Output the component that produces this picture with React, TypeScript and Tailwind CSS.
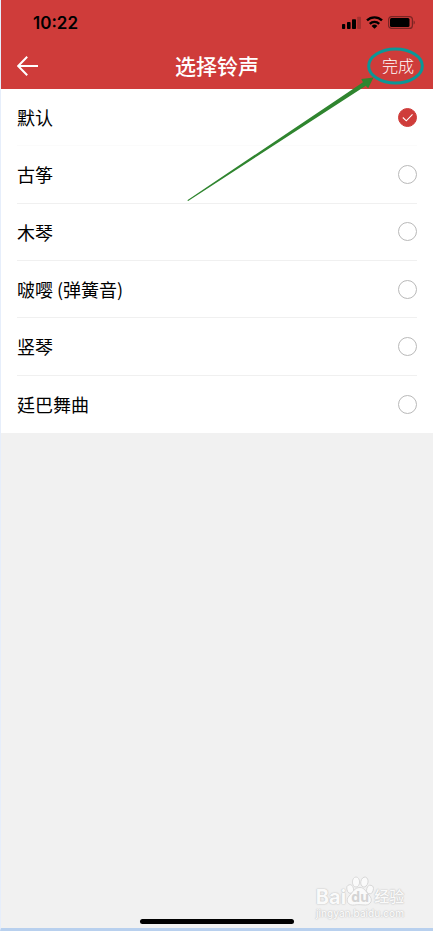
import { useState } from "react";

const ringtones = ["默认", "古筝", "木琴", "啵嘤 (弹簧音)", "竖琴", "廷巴舞曲"];

function StatusBar() {
  return (
    <div className="flex h-11 items-center justify-between pr-[18px] pl-8 text-black">
      <time className="pt-px font-[Inter,sans-serif] text-[17px] leading-5 font-semibold">10:22</time>
      <div className="flex items-center gap-[5px] pt-px">
        <svg width="19" height="13" viewBox="0 0 19 13" aria-label="信号">
          <rect x="0" y="8" width="3.2" height="5" rx="0.8" />
          <rect x="5" y="6" width="3.6" height="7" rx="0.8" />
          <rect x="10" y="3.2" width="4" height="9.8" rx="0.8" />
          <rect x="15.2" y="0.8" width="3.8" height="12.2" rx="0.8" fill="#a5302f" />
        </svg>
        <svg width="17" height="13" viewBox="0 0 17 13" fill="none" stroke="currentColor" strokeWidth="2.4" aria-label="无线网络">
          <path d="M1 4.4a10.8 10.8 0 0 1 15 0" />
          <path d="M3.8 7.8a6.8 6.8 0 0 1 9.4 0" />
          <path d="M8.5 12.8 5.6 10a4.2 4.2 0 0 1 5.8 0z" fill="currentColor" stroke="none" />
        </svg>
        <svg width="27" height="13" viewBox="0 0 27 13" aria-label="电量">
          <rect x="0.6" y="0.6" width="23.8" height="11.8" rx="3" fill="none" stroke="#7a2423" strokeWidth="1.2" />
          <rect x="2" y="2" width="19.5" height="9" rx="1.5" />
          <path d="M25.6 4.6v4c.7-.3 1.2-1.1 1.2-2s-.5-1.7-1.2-2z" fill="#7a2423" />
        </svg>
      </div>
    </div>
  );
}

function Pointer() {
  return (
    <svg
      className="pointer-events-none absolute top-10 right-2 z-10"
      width="240"
      height="164"
      viewBox="185 40 240 164"
      aria-hidden="true"
    >
      <ellipse cx="395.5" cy="66" rx="26.8" ry="17" fill="none" stroke="#0b9797" strokeWidth="3" />
      <path d="M187.3 200.2 363 82.2 361.2 79 373.5 77.6 368.2 88.2 365.8 85.8 188.2 201z" fill="#2f852f" />
    </svg>
  );
}

function Watermark() {
  return (
    <div className="flex w-[90px] flex-col items-center font-[Inter,'Noto_Sans_CJK_SC',sans-serif] text-[#fafafa] [text-shadow:0_0_1px_#ccc,0_0_1px_#ccc,0_0_2px_#ccc]">
      <div className="flex h-8 items-end text-[20px] leading-5 font-bold">
        <span>Bai</span>
        <span className="relative flex h-8 w-7 shrink-0 items-end justify-center">
          <svg className="absolute inset-0" width="28" height="32" viewBox="0 0 28 32" fill="#fafafa" stroke="#d2d2d2" strokeWidth="0.8" aria-hidden="true">
            <ellipse cx="4.2" cy="14" rx="3.3" ry="4.3" transform="rotate(-15 4.2 14)" />
            <ellipse cx="10" cy="7" rx="3.6" ry="5" />
            <ellipse cx="18.4" cy="7" rx="3.6" ry="5" transform="rotate(12 18.4 7)" />
            <ellipse cx="24" cy="14.5" rx="3.3" ry="4.3" transform="rotate(15 24 14.5)" />
            <path d="M14 12.5c4.5 0 6 4.500 9 7.500 4.500 4.500 2 10-3.500 10-3 0-7.500-.8-11 0-6.500 1-9.500-4.500-5.500-9 4-4 5.500-8.500 11-8.500z" />
          </svg>
          <span className="relative text-[14px] leading-5 text-[#d4d4d4] [text-shadow:none]">du</span>
        </span>
        <span className="text-[15px] font-medium">经验</span>
      </div>
      <span className="text-[10px] leading-3 font-medium">jingyan.baidu.com</span>
    </div>
  );
}

export default function App() {
  const [selected, setSelected] = useState(ringtones[0]);
  return (
    <div className="relative flex min-h-screen flex-col border-b-3 border-l border-b-[#b8d0ee] border-l-[#e6eefb] bg-[#f1f1f1] font-['Noto_Sans_CJK_SC',sans-serif]">
      <header className="bg-[#cf3c3a] text-white">
        <StatusBar />
        <nav className="grid h-[45px] grid-cols-[1fr_auto_1fr] items-center px-4 pb-0.5">
          <button type="button" aria-label="返回" className="justify-self-start">
            <svg width="21" height="20" viewBox="0 0 21 20" fill="none" stroke="currentColor" strokeWidth="2">
              <path d="M10.2 0.8 1.2 10l9 9.2M1.2 10H21" />
            </svg>
          </button>
          <h1 className="pb-0.5 text-[21px] leading-6 font-medium">选择铃声</h1>
          <button type="button" className="justify-self-end pr-[3px] pb-0.5 text-base leading-6 font-light">完成</button>
        </nav>
      </header>
      <Pointer />
      <main className="grid h-[344px] grid-rows-6 bg-white px-4">
        {ringtones.map((name, i) => (
          <label
            key={name}
            className={`flex items-center justify-between text-lg leading-6 text-black ${
              i === ringtones.length - 1 ? "" : i === 0 ? "border-b border-[#fbfbfb]" : "border-b border-[#f0f0f0]"
            }`}
          >
            <span>{name}</span>
            <span className="relative flex size-[19px]">
              <input
                type="radio"
                name="ringtone"
                checked={selected === name}
                onChange={() => setSelected(name)}
                className="peer size-[19px] appearance-none rounded-full border border-[#b9b9b9] bg-white checked:border-[#cf3c3a] checked:bg-[#cf3c3a]"
              />
              <svg
                className="pointer-events-none absolute inset-0 hidden peer-checked:block"
                width="19"
                height="19"
                viewBox="0 0 19 19"
                fill="none"
                stroke="#fff"
                strokeWidth="1.1"
                aria-hidden="true"
              >
                <path d="m4.8 9.5 3.5 3.3 6.2-6.5" />
              </svg>
            </span>
          </label>
        ))}
      </main>
      <footer className="mt-auto flex flex-col">
        <div className="flex justify-end pr-7">
          <Watermark />
        </div>
        <div className="mb-1 h-[5px] w-[154px] self-center rounded-full bg-black" />
      </footer>
    </div>
  );
}
